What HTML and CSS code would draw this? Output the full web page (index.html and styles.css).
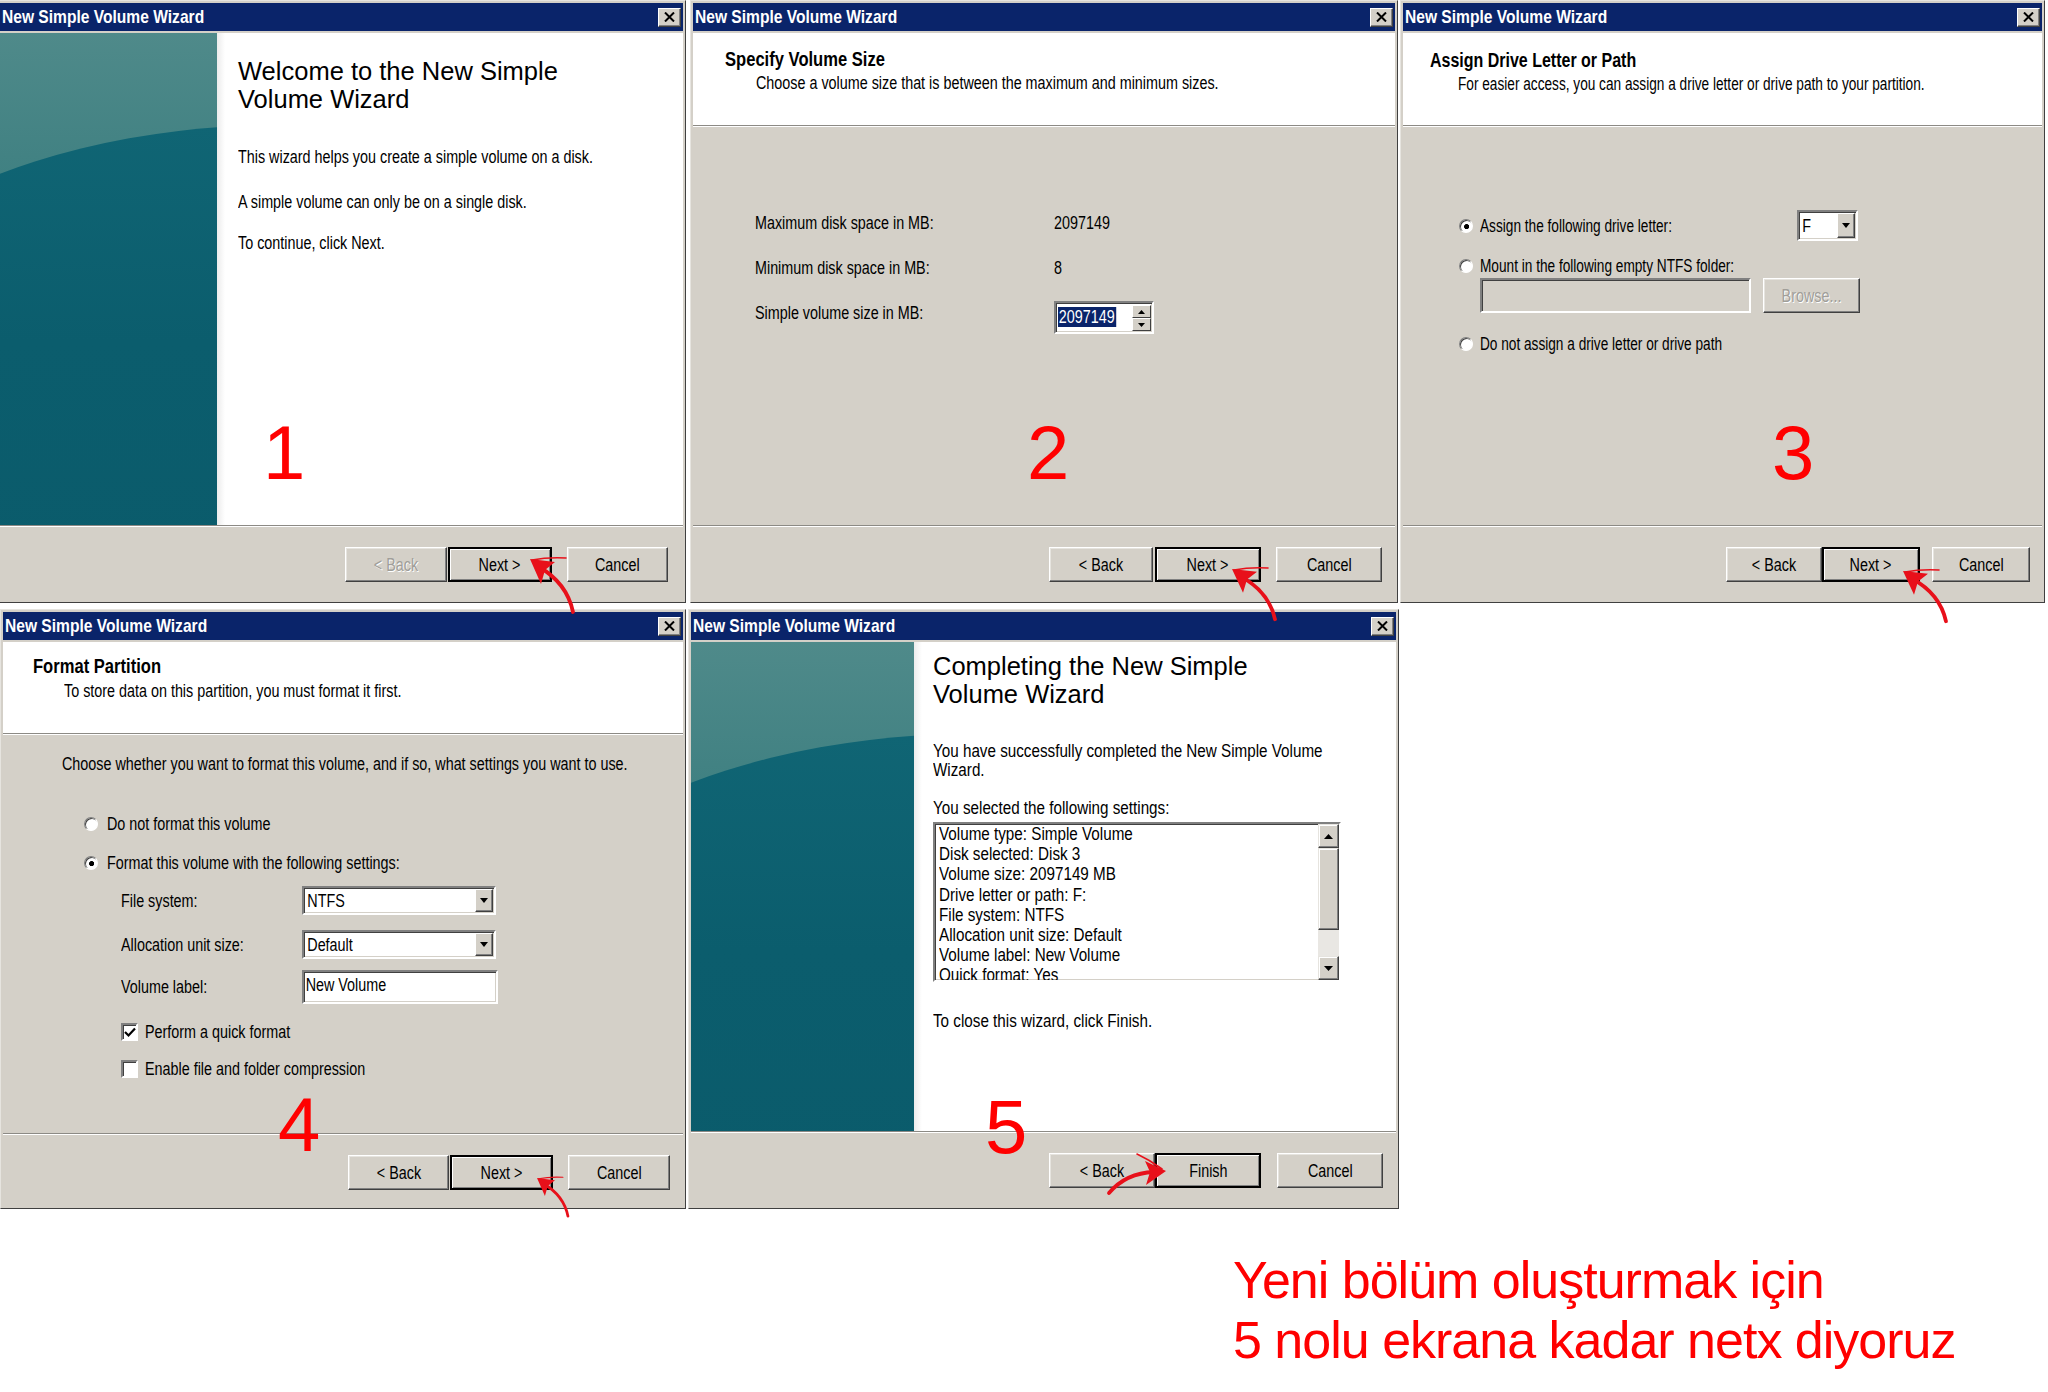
FILE: index.html
```html
<!DOCTYPE html>
<html>
<head>
<meta charset="utf-8">
<title>New Simple Volume Wizard</title>
<link rel="stylesheet" href="styles.css">
</head>
<body>
<div class="row row1">
  <section class="win w1">
    <div class="titlebar"><span class="ttl">New Simple Volume Wizard</span><span class="close"><svg width="11" height="10" viewBox="0 0 11 10"><path d="M1 0.5 L10 9.5 M10 0.5 L1 9.5" stroke="#000" stroke-width="2"/></svg></span></div>
    <div class="content">
      <div class="teal"></div>
      <div class="wpanel">
        <h1 class="big">Welcome to the New Simple<br>Volume Wizard</h1>
        <p class="t p1">This wizard helps you create a simple volume on a disk.</p>
        <p class="t p2">A simple volume can only be on a single disk.</p>
        <p class="t p3">To continue, click Next.</p>
      </div>
    </div>
    <div class="sep"></div>
    <div class="footer">
      <div class="btn off"><span>&lt; Back</span></div>
      <div class="btn def"><span>Next &gt;</span></div>
      <div class="btn cancel"><span>Cancel</span></div>
    </div>
    <span class="num n1">1</span>
  </section>

  <section class="win w2">
    <div class="titlebar"><span class="ttl">New Simple Volume Wizard</span><span class="close"><svg width="11" height="10" viewBox="0 0 11 10"><path d="M1 0.5 L10 9.5 M10 0.5 L1 9.5" stroke="#000" stroke-width="2"/></svg></span></div>
    <div class="header">
      <div class="htitle">Specify Volume Size</div>
      <div class="hsub">Choose a volume size that is between the maximum and minimum sizes.</div>
    </div>
    <div class="sep"></div>
    <div class="body">
      <div class="sizes">
        <span class="t">Maximum disk space in MB:</span><span class="t">2097149</span>
        <span class="t">Minimum disk space in MB:</span><span class="t">8</span>
        <span class="t">Simple volume size in MB:</span>
        <div class="spin"><span class="sel">2097149</span><span class="spinbtns"><span class="sb"><svg width="7" height="4" viewBox="0 0 7 4"><path d="M3.5 0 L7 4 L0 4Z" fill="#000"/></svg></span><span class="sb"><svg width="7" height="4" viewBox="0 0 7 4"><path d="M0 0 L7 0 L3.5 4Z" fill="#000"/></svg></span></span></div>
      </div>
    </div>
    <div class="sep"></div>
    <div class="footer">
      <div class="btn"><span>&lt; Back</span></div>
      <div class="btn def"><span>Next &gt;</span></div>
      <div class="btn cancel"><span>Cancel</span></div>
    </div>
    <span class="num n2">2</span>
  </section>

  <section class="win w3">
    <div class="titlebar"><span class="ttl">New Simple Volume Wizard</span><span class="close"><svg width="11" height="10" viewBox="0 0 11 10"><path d="M1 0.5 L10 9.5 M10 0.5 L1 9.5" stroke="#000" stroke-width="2"/></svg></span></div>
    <div class="header">
      <div class="htitle">Assign Drive Letter or Path</div>
      <div class="hsub">For easier access, you can assign a drive letter or drive path to your partition.</div>
    </div>
    <div class="sep"></div>
    <div class="body">
      <div class="letterrow">
        <div class="opt"><span class="radio on"></span><span class="t">Assign the following drive letter:</span></div>
        <div class="combo combo-f"><span class="ctext">F</span><span class="dd"><svg width="8" height="5" viewBox="0 0 8 5"><path d="M0 0 L8 0 L4 5Z" fill="#000"/></svg></span></div>
      </div>
      <div class="opt opt2"><span class="radio"></span><span class="t">Mount in the following empty NTFS folder:</span></div>
      <div class="pathrow">
        <div class="pathbox"></div>
        <div class="btn off browse"><span>Browse...</span></div>
      </div>
      <div class="opt opt3"><span class="radio"></span><span class="t">Do not assign a drive letter or drive path</span></div>
    </div>
    <div class="sep"></div>
    <div class="footer">
      <div class="btn"><span>&lt; Back</span></div>
      <div class="btn def"><span>Next &gt;</span></div>
      <div class="btn cancel"><span>Cancel</span></div>
    </div>
    <span class="num n3">3</span>
  </section>
</div>

<div class="row row2">
  <section class="win w4">
    <div class="titlebar"><span class="ttl">New Simple Volume Wizard</span><span class="close"><svg width="11" height="10" viewBox="0 0 11 10"><path d="M1 0.5 L10 9.5 M10 0.5 L1 9.5" stroke="#000" stroke-width="2"/></svg></span></div>
    <div class="header">
      <div class="htitle">Format Partition</div>
      <div class="hsub">To store data on this partition, you must format it first.</div>
    </div>
    <div class="sep"></div>
    <div class="body">
      <p class="t choose">Choose whether you want to format this volume, and if so, what settings you want to use.</p>
      <div class="opt f1"><span class="radio"></span><span class="t">Do not format this volume</span></div>
      <div class="opt f2"><span class="radio on"></span><span class="t">Format this volume with the following settings:</span></div>
      <div class="field fs"><span class="t flabel">File system:</span><div class="combo combo-w"><span class="ctext">NTFS</span><span class="dd"><svg width="8" height="5" viewBox="0 0 8 5"><path d="M0 0 L8 0 L4 5Z" fill="#000"/></svg></span></div></div>
      <div class="field fa"><span class="t flabel">Allocation unit size:</span><div class="combo combo-w"><span class="ctext">Default</span><span class="dd"><svg width="8" height="5" viewBox="0 0 8 5"><path d="M0 0 L8 0 L4 5Z" fill="#000"/></svg></span></div></div>
      <div class="field fv"><span class="t flabel">Volume label:</span><div class="textbox"><span class="ctext">New Volume</span></div></div>
      <div class="chk c1"><span class="box"><svg width="12" height="11" viewBox="0 0 12 11"><path d="M1 5 L4.5 8.5 L11 1.5" fill="none" stroke="#000" stroke-width="2.2"/></svg></span><span class="t">Perform a quick format</span></div>
      <div class="chk c2"><span class="box"></span><span class="t">Enable file and folder compression</span></div>
    </div>
    <div class="sep"></div>
    <div class="footer">
      <div class="btn"><span>&lt; Back</span></div>
      <div class="btn def"><span>Next &gt;</span></div>
      <div class="btn cancel"><span>Cancel</span></div>
    </div>
    <span class="num n4">4</span>
  </section>

  <section class="win w5">
    <div class="titlebar"><span class="ttl">New Simple Volume Wizard</span><span class="close"><svg width="11" height="10" viewBox="0 0 11 10"><path d="M1 0.5 L10 9.5 M10 0.5 L1 9.5" stroke="#000" stroke-width="2"/></svg></span></div>
    <div class="content">
      <div class="teal"></div>
      <div class="wpanel">
        <h1 class="big">Completing the New Simple<br>Volume Wizard</h1>
        <p class="t q1">You have successfully completed the New Simple Volume<br>Wizard.</p>
        <p class="t q2">You selected the following settings:</p>
        <div class="listbox">
          <div class="lines">
            <div>Volume type: Simple Volume</div>
            <div>Disk selected: Disk 3</div>
            <div>Volume size: 2097149 MB</div>
            <div>Drive letter or path: F:</div>
            <div>File system: NTFS</div>
            <div>Allocation unit size: Default</div>
            <div>Volume label: New Volume</div>
            <div>Quick format: Yes</div>
          </div>
          <div class="scroll">
            <span class="sbtn"><svg width="9" height="5" viewBox="0 0 9 5"><path d="M4.5 0 L9 5 L0 5Z" fill="#000"/></svg></span>
            <span class="thumb"></span>
            <span class="track"></span>
            <span class="sbtn"><svg width="9" height="5" viewBox="0 0 9 5"><path d="M0 0 L9 0 L4.5 5Z" fill="#000"/></svg></span>
          </div>
        </div>
        <p class="t q3">To close this wizard, click Finish.</p>
      </div>
    </div>
    <div class="sep"></div>
    <div class="footer">
      <div class="btn"><span>&lt; Back</span></div>
      <div class="btn def"><span>Finish</span></div>
      <div class="btn cancel"><span>Cancel</span></div>
    </div>
    <span class="num n5">5</span>
  </section>
</div>

<div class="note">Yeni bölüm oluşturmak için<br>5 nolu ekrana kadar netx diyoruz</div>

<svg class="arrows" width="2048" height="1392" viewBox="0 0 2048 1392">
  <defs>
    <g id="arr">
      <path d="M43 53 Q37 24 9 8" fill="none" stroke="#e8101a" stroke-width="3.8" stroke-linecap="round"/>
      <path d="M0 0 L25 3 L15 11 L11 25 Z" fill="#e8101a"/>
      <path d="M2 1 Q18 -2 36 -1" fill="none" stroke="#e8101a" stroke-width="1.6" stroke-linecap="round"/>
    </g>
  </defs>
  <use href="#arr" transform="translate(530 559)"/>
  <use href="#arr" transform="translate(1232 569) scale(1 0.95)"/>
  <use href="#arr" transform="translate(1903 571) scale(1 0.95)"/>
  <use href="#arr" transform="translate(537 1178) scale(0.72)"/>
  <g>
    <path d="M1109 1193 Q1126 1173 1154 1172" fill="none" stroke="#e8101a" stroke-width="3.8" stroke-linecap="round"/>
    <path d="M1166 1171 L1145 1161 L1150 1172 L1146 1185 Z" fill="#e8101a"/>
    <path d="M1137 1154 Q1150 1160 1162 1169" fill="none" stroke="#e8101a" stroke-width="1.6" stroke-linecap="round"/>
  </g>
</svg>
</body>
</html>
```

FILE: styles.css
```css
* { box-sizing: border-box; }
html, body { margin: 0; padding: 0; background: #fff; }
body {
  width: 2048px;
  height: 1392px;
  overflow: hidden;
  position: relative;
  font-family: "Liberation Sans", Arial, sans-serif;
  font-size: 17.5px;
  color: #000;
}
p, h1 { margin: 0; }
.t { line-height: 20px; white-space: nowrap; }

/* the source screenshots are horizontally squeezed: condense the UI text */
.t, .hsub, .ttl, .ctext, .lines > div, .sel {
  transform: scaleX(0.82);
  transform-origin: 0 50%;
}
.htitle { transform: scaleX(0.85); transform-origin: 0 50%; }
.w3 .t, .w3 .hsub { transform: scaleX(0.78); }
.w3 .htitle { transform: scaleX(0.82); }
.w5 .t, .w5 .lines > div { transform: scaleX(0.87); }

.row { display: flex; align-items: flex-start; }
.row2 { margin-top: 6px; }

/* window frame */
.win {
  position: relative;
  display: flex;
  flex-direction: column;
  background: #d4d0c8;
  border: 1px solid;
  border-color: #e6e4df #404040 #404040 #e6e4df;
  padding: 2px;
}
.w1 { width: 686px; height: 603px; margin-right: 4px; border-left: 0; padding-left: 0; }
.w2 { width: 708px; height: 603px; margin-right: 2px; }
.w3 { width: 645px; height: 603px; }
.w4 { width: 686px; height: 600px; margin-right: 2px; }
.w5 { width: 711px; height: 600px; }

.titlebar {
  flex: none;
  height: 28px;
  background: #0a246a;
  display: flex;
  align-items: center;
  padding: 0 2px 0 2px;
}
.ttl {
  flex: 1;
  color: #fff;
  font-weight: bold;
  font-size: 19px;
  line-height: 28px;
  white-space: nowrap;
}
.close {
  width: 23px;
  height: 19px;
  background: #d4d0c8;
  border: 1px solid;
  border-color: #fff #404040 #404040 #fff;
  box-shadow: inset -1px -1px #808080;
  display: flex;
  align-items: center;
  justify-content: center;
}

.sep {
  flex: none;
  height: 2px;
  border-top: 1px solid #8c8a85;
  border-bottom: 1px solid #fff;
}

/* welcome / completion pages */
.content { flex: none; margin-top: 2px; display: flex; background: #fff; }
.w1 .content { height: 492px; }
.w5 .content { height: 489px; }
.teal {
  flex: none;
  position: relative;
  overflow: hidden;
  background: linear-gradient(180deg, #4f8a8a 0%, #428283 25%, #337a7c 55%, #2a757b 100%);
}
.teal::after {
  content: "";
  position: absolute;
  left: -240px;
  top: 92px;
  width: 1040px;
  height: 620px;
  border-radius: 50%;
  background: linear-gradient(180deg, #106574 0%, #0b5d6d 35%, #0a5a6a 100%);
}
.w1 .teal { width: 217px; }
.w5 .teal { width: 223px; }
.wpanel {
  flex: 1;
  background: linear-gradient(90deg, #ececec 0, #fff 8px);
}
.w1 .wpanel { padding: 24px 0 0 21px; }
.w5 .wpanel { padding: 10px 0 0 19px; }
.big {
  font-weight: normal;
  font-size: 25.5px;
  line-height: 28px;
  white-space: nowrap;
}
.p1 { margin-top: 34px; }
.p2 { margin-top: 25px; }
.p3 { margin-top: 21px; }
.q1 { margin-top: 34px; line-height: 19px; }
.q2 { margin-top: 18px; }
.q3 { margin-top: 29px; }

.listbox {
  margin-top: 4px;
  width: 408px;
  height: 160px;
  display: flex;
  background: #fff;
  border: 2px solid;
  border-color: #808080 #fff #fff #808080;
  box-shadow: inset 1px 1px #404040, inset -1px -1px #d4d0c8;
}
.lines {
  flex: 1;
  overflow: hidden;
  padding: 0 0 0 4px;
  line-height: 20.2px;
  white-space: nowrap;
}
.scroll {
  flex: none;
  width: 21px;
  display: flex;
  flex-direction: column;
  background: #e9e7e3;
}
.sbtn, .thumb {
  background: #d4d0c8;
  border: 1px solid;
  border-color: #e6e4df #404040 #404040 #e6e4df;
  box-shadow: inset -1px -1px #808080, inset 1px 1px #fff;
}
.sbtn { height: 24px; display: flex; align-items: center; justify-content: center; }
.thumb { height: 82px; }
.track { height: 26px; }

/* header pages */
.header { flex: none; margin-top: 2px; background: #fff; height: 92px; }
.w4 .header { height: 91px; }
.htitle { font-weight: bold; font-size: 19.5px; line-height: 22px; white-space: nowrap; }
.hsub { line-height: 20px; white-space: nowrap; }
.w2 .header { padding: 15px 0 0 32px; }
.w2 .hsub { margin: 3px 0 0 31px; }
.w3 .header { padding: 16px 0 0 27px; }
.w3 .hsub { margin: 3px 0 0 28px; }
.w4 .header { padding: 13px 0 0 30px; }
.w4 .hsub { margin: 4px 0 0 31px; }

.body { flex: none; height: 398px; }

/* step 2 */
.w2 .body { padding: 86px 0 0 62px; }
.sizes {
  display: grid;
  grid-template-columns: 299px auto;
  row-gap: 25px;
  align-items: start;
}
.spin {
  margin-top: -2px;
  width: 100px;
  height: 33px;
  display: flex;
  background: #fff;
  border: 2px solid;
  border-color: #808080 #fff #fff #808080;
  box-shadow: inset 1px 1px #404040, inset -1px -1px #d4d0c8;
}
.sel {
  margin: 4px 0 0 2px;
  height: 20px;
  line-height: 20px;
  padding: 0 2px 0 1px;
  background: #0a246a;
  color: #fff;
}
.spinbtns {
  margin: 2px 1px 0 auto;
  width: 19px;
  display: flex;
  flex-direction: column;
}
.sb {
  height: 13px;
  background: #d4d0c8;
  border: 1px solid;
  border-color: #fff #404040 #404040 #fff;
  display: flex;
  align-items: center;
  justify-content: center;
}

/* controls */
.opt { display: flex; align-items: center; gap: 7px; }
.radio {
  flex: none;
  width: 14px;
  height: 14px;
  border-radius: 50%;
  background: #fff;
  border: 1px solid;
  border-color: #808080 #fff #fff #808080;
  box-shadow: inset 1px 1px #404040;
}
.radio.on { background: radial-gradient(circle at 55% 55%, #000 0 2.2px, #fff 2.9px); }

.combo, .textbox {
  display: flex;
  background: #fff;
  border: 2px solid;
  border-color: #808080 #fff #fff #808080;
  box-shadow: inset 1px 1px #404040, inset -1px -1px #d4d0c8;
}
.ctext { flex: 1; padding-left: 4px; line-height: 20px; white-space: nowrap; }
.dd {
  flex: none;
  width: 18px;
  margin: 1px;
  background: #d4d0c8;
  border: 1px solid;
  border-color: #fff #404040 #404040 #fff;
  box-shadow: inset -1px -1px #808080;
  display: flex;
  align-items: center;
  justify-content: center;
}
.combo .ctext { align-self: center; }

.btn {
  flex: none;
  height: 35px;
  display: flex;
  align-items: center;
  justify-content: center;
  background: #d4d0c8;
  border: 1px solid;
  border-color: #fff #404040 #404040 #fff;
  box-shadow: inset -1px -1px #808080, inset 1px 1px #e6e4df;
  white-space: nowrap;
  line-height: 20px;
}
.btn > span { display: inline-block; transform: scaleX(0.82); }
.btn.def {
  border: 2px solid #000;
  box-shadow: inset 1px 1px #fff, inset -1px -1px #808080;
}
.btn.off { color: #a09e99; text-shadow: 1px 1px #fff; }

/* step 3 */
.w3 .body { padding: 83px 0 0 56px; }
.letterrow {
  width: 399px;
  display: flex;
  align-items: center;
  justify-content: space-between;
}
.combo-f { width: 61px; height: 31px; }
.opt2 { margin-top: 15px; }
.pathrow { display: flex; margin-top: 2px; padding-left: 21px; }
.pathbox {
  width: 271px;
  height: 35px;
  background: #d4d0c8;
  border: 2px solid;
  border-color: #808080 #fff #fff #808080;
  box-shadow: inset 1px 1px #404040, inset -1px -1px #d4d0c8;
}
.browse { margin-left: 12px; width: 97px; }
.opt3 { margin-top: 21px; }

/* step 4 */
.w4 .body { padding: 19px 0 0 59px; }
.w4 .opt { padding-left: 22px; gap: 9px; }
.f1 { margin-top: 40px; }
.f2 { margin-top: 19px; }
.field { display: flex; align-items: center; padding-left: 59px; }
.flabel { width: 181px; flex: none; }
.fs { margin-top: 13px; }
.fa { margin-top: 15px; }
.fv { margin-top: 11px; }
.combo-w { width: 194px; height: 29px; }
.textbox { width: 196px; height: 34px; }
.textbox .ctext { padding-top: 3px; padding-left: 2px; }
.chk { display: flex; align-items: center; gap: 7px; padding-left: 59px; }
.box {
  flex: none;
  width: 17px;
  height: 18px;
  background: #fff;
  border: 2px solid;
  border-color: #808080 #fff #fff #808080;
  box-shadow: inset 1px 1px #404040;
  display: flex;
  align-items: center;
  justify-content: center;
}
.c1 { margin-top: 18px; }
.c2 { margin-top: 17px; }

/* footers */
.footer {
  flex: 1;
  display: flex;
  justify-content: flex-end;
  align-items: flex-start;
  padding-top: 20px;
}
.w1 .footer { padding-right: 15px; }
.w1 .btn { width: 102px; }
.w1 .btn.def { width: 104px; margin-left: 1px; }
.w1 .btn.cancel { margin-left: 15px; width: 101px; }
.w2 .footer { padding-right: 13px; }
.w2 .btn { width: 104px; }
.w2 .btn.def { width: 106px; margin-left: 2px; }
.w2 .btn.cancel { margin-left: 15px; width: 106px; }
.w3 .footer { padding-right: 12px; }
.w3 .btn { width: 96px; }
.w3 .btn.def { width: 98px; margin-left: 0; }
.w3 .btn.cancel { margin-left: 12px; width: 98px; }
.w3 .btn.browse { width: 97px; margin-left: 12px; }
.w4 .footer { padding-right: 13px; }
.w4 .btn { width: 101px; }
.w4 .btn.def { width: 103px; margin-left: 1px; }
.w4 .btn.cancel { margin-left: 15px; width: 102px; }
.w5 .footer { padding-right: 13px; }
.w5 .btn { width: 106px; }
.w5 .btn.def { margin-left: 0; }
.w5 .btn.cancel { margin-left: 16px; }

/* annotations */
.num {
  position: absolute;
  color: #ff0000;
  font-size: 76px;
  line-height: 76px;
  z-index: 3;
}
.n1 { left: 263px; top: 414px; }
.n2 { left: 336px; top: 414px; }
.n3 { left: 371px; top: 414px; }
.n4 { left: 277px; top: 477px; }
.n5 { left: 296px; top: 479px; }

.note {
  margin: 41px 0 0 1233px;
  color: #ff0000;
  font-size: 52px;
  line-height: 60px;
  letter-spacing: -1px;
  white-space: nowrap;
}

.arrows {
  position: absolute;
  left: 0;
  top: 0;
  pointer-events: none;
  z-index: 5;
}
```
